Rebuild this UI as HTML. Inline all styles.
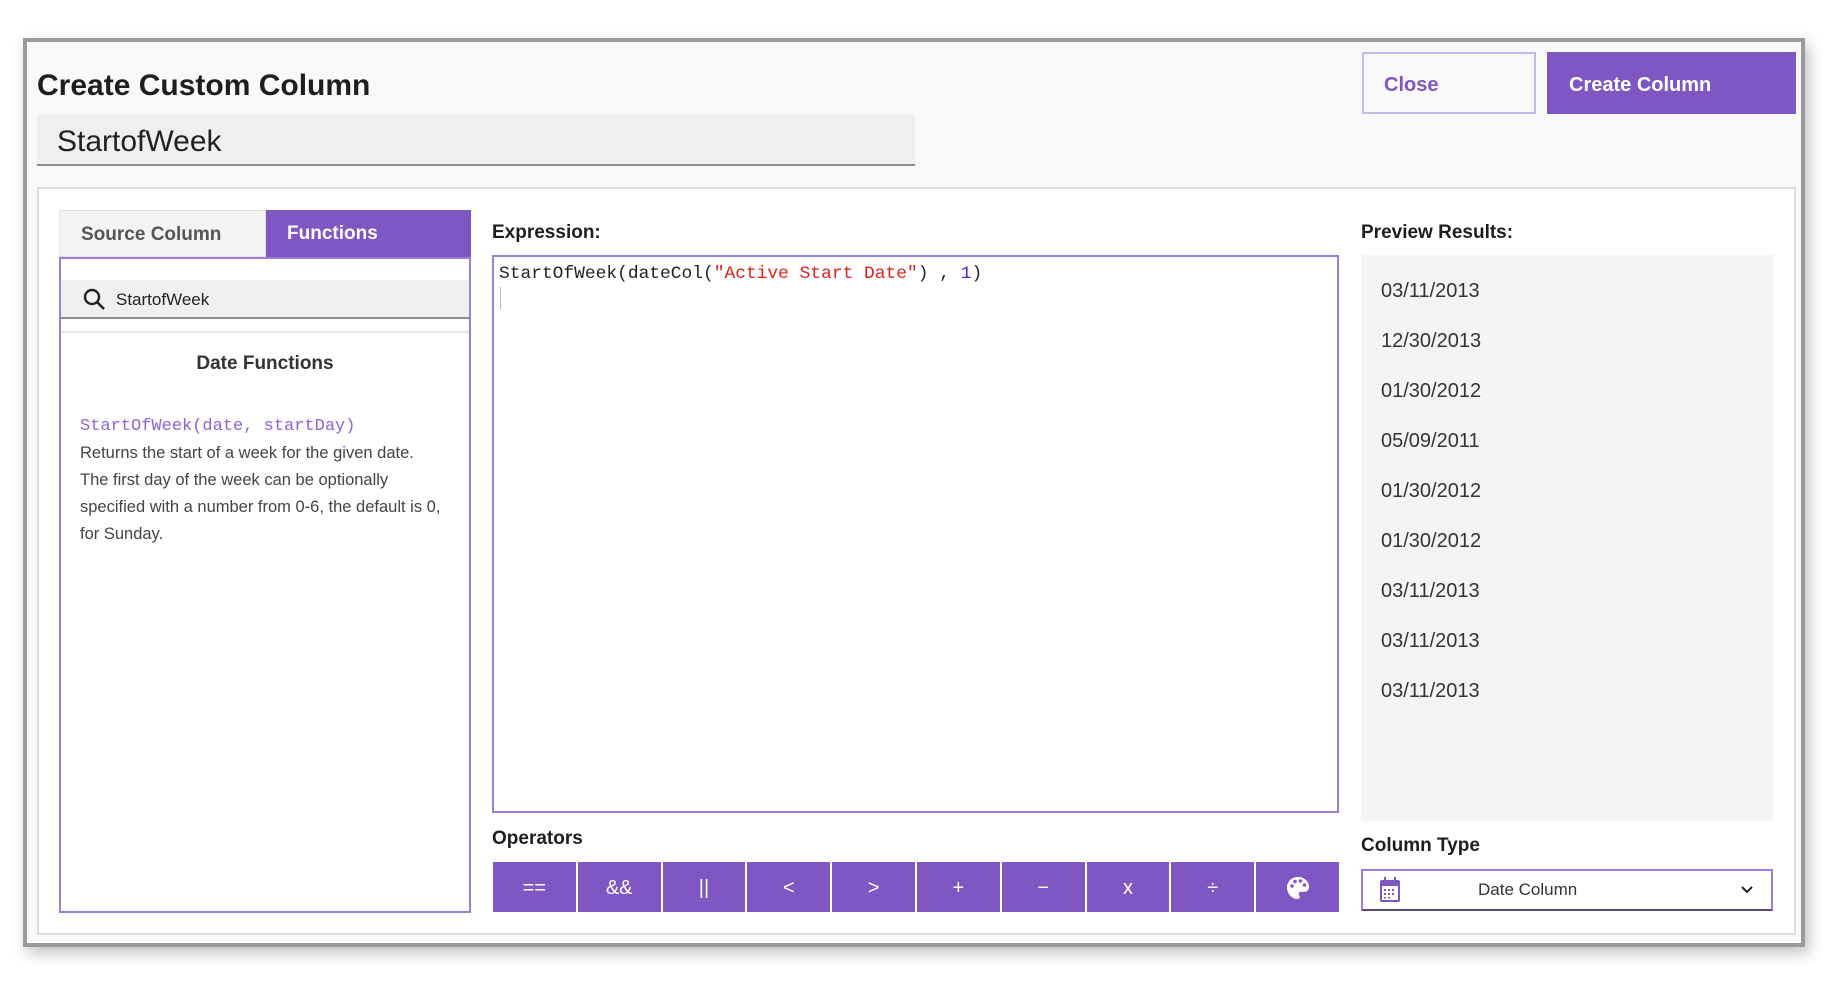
<!DOCTYPE html>
<html><head><meta charset="utf-8"><style>
*{box-sizing:border-box;margin:0;padding:0}
body{width:1828px;height:990px;background:#fff;position:relative;overflow:hidden;font-family:"Liberation Sans",sans-serif;color:#222}
.a{position:absolute}
.dlg{left:23px;top:38px;width:1782px;height:909px;background:#f9f9f9;border:4px solid #9a9a9a;box-shadow:4px 6px 14px rgba(0,0,0,.25)}
.title{left:37px;top:69px;font-size:30px;font-weight:bold;color:#1e1e1e}
.name{left:37px;top:115px;width:878px;height:51px;background:#efefef;border-bottom:2px solid #8d8d8d;font-size:30px;padding:10px 0 0 20px;color:#222}
.close{left:1362px;top:52px;width:174px;height:62px;border:2px solid #c9b8ec;color:#7e57c2;font-weight:bold;font-size:20px;padding:20px 0 0 20px}
.create{left:1547px;top:52px;width:249px;height:62px;background:#7e57c2;color:#fff;font-weight:bold;font-size:20px;padding:22px 0 0 22px}
.panel{left:37px;top:187px;width:1759px;height:748px;background:#fff;border:2px solid #dcdcdc}
.lbl{font-weight:bold;font-size:19px;color:#1e1e1e}
.tabS{left:59px;top:210px;width:207px;height:47px;background:#f3f3f3;color:#555;font-weight:bold;font-size:19px;padding:13px 0 0 21px;border:1px solid #e4e4e4}
.tabF{left:266px;top:210px;width:205px;height:47px;background:#7e57c2;color:#fff;font-weight:bold;font-size:19px;padding:13px 0 0 21px}
.lp{left:59px;top:257px;width:412px;height:656px;border:2px solid #9b7fdc;background:#fff}
.search{left:61px;top:280px;width:408px;height:39px;background:#efefef;border-bottom:2px solid #8d8d8d;font-size:17px;padding:10px 0 0 55px;color:#222}
.sep{left:61px;top:331px;width:408px;height:2px;background:#e6e6e6}
.df{left:61px;top:353px;width:408px;text-align:center;font-weight:bold;font-size:19px;color:#333}
.sig{left:80px;top:417px;font-family:"Liberation Mono",monospace;font-size:17px;color:#8e63d9}
.desc{left:80px;top:440px;width:362px;font-size:16.5px;line-height:27px;color:#444}
.ed{left:492px;top:255px;width:847px;height:558px;border:2px solid #9b7fdc;background:#fff}
.code{left:499px;top:264px;font-family:"Liberation Mono",monospace;font-size:17.9px;color:#222;white-space:pre}
.ops{left:493px;top:862px;width:846px;height:50px;display:flex;gap:2px}
.ops div{flex:1;background:#7e57c2;color:#fff;font-size:20px;display:flex;align-items:center;justify-content:center;padding-top:2px}
.pv{left:1361px;top:255px;width:412px;height:566px;background:#f4f4f4}
.pv div{position:absolute;left:20px;font-size:20px;color:#333}
.sel{left:1361px;top:869px;width:412px;height:42px;border:2px solid #9b7fdc;border-bottom:2px solid #5a4a80;background:#fff}
</style></head><body>
<div class="a dlg"></div>
<div class="a title">Create Custom Column</div>
<div class="a name">StartofWeek</div>
<div class="a close">Close</div>
<div class="a create">Create Column</div>
<div class="a panel"></div>
<div class="a tabS">Source Column</div>
<div class="a tabF">Functions</div>
<div class="a lp"></div>
<div class="a search">StartofWeek</div>
<svg class="a" style="left:82px;top:287px" width="26" height="26" viewBox="0 0 26 26"><circle cx="10" cy="10" r="7" fill="none" stroke="#222" stroke-width="2.4"/><path d="M15 15 L22 22" stroke="#222" stroke-width="2.6"/></svg>
<div class="a sep"></div>
<div class="a df">Date Functions</div>
<div class="a sig">StartOfWeek(date, startDay)</div>
<div class="a desc">Returns the start of a week for the given date. The first day of the week can be optionally specified with a number from 0-6, the default is 0, for Sunday.</div>
<div class="a lbl" style="left:492px;top:222px">Expression:</div>
<div class="a ed"></div>
<div class="a code">StartOfWeek(dateCol(<span style="color:#e0201c">"Active Start Date"</span>) , <span style="color:#3a2bd6">1</span>)</div>
<div class="a" style="left:500px;top:287px;width:1px;height:22px;background:#bbb"></div>
<div class="a lbl" style="left:492px;top:828px">Operators</div>
<div class="a ops"><div>==</div><div>&amp;&amp;</div><div>||</div><div>&lt;</div><div>&gt;</div><div>+</div><div>−</div><div>x</div><div>÷</div><div><svg width="26" height="26" viewBox="0 0 26 26"><path d="M13 2C6.5 2 2 6.8 2 12.5 2 18.5 6.8 24 12.5 24c1.6 0 2.2-1 2.2-2.1 0-1.4-1-1.8-1-3 0-1.2 1-2 2.3-2H19c3 0 5-2.2 5-5C24 6.3 19 2 13 2z" fill="#fff"/><circle cx="7" cy="11" r="1.8" fill="#7e57c2"/><circle cx="10" cy="6.5" r="1.8" fill="#7e57c2"/><circle cx="15.5" cy="6" r="1.8" fill="#7e57c2"/><circle cx="19.5" cy="10" r="1.8" fill="#7e57c2"/></svg></div></div>
<div class="a lbl" style="left:1361px;top:222px">Preview Results:</div>
<div class="a pv">
<div style="top:25px">03/11/2013</div><div style="top:75px">12/30/2013</div><div style="top:125px">01/30/2012</div><div style="top:175px">05/09/2011</div><div style="top:225px">01/30/2012</div><div style="top:275px">01/30/2012</div><div style="top:325px">03/11/2013</div><div style="top:375px">03/11/2013</div><div style="top:425px">03/11/2013</div>
</div>
<div class="a lbl" style="left:1361px;top:835px">Column Type</div>
<div class="a sel"></div>
<svg class="a" style="left:1378px;top:876px" width="24" height="28" viewBox="0 0 24 28"><rect x="2" y="4" width="20" height="22" rx="2" fill="#7e57c2"/><rect x="4" y="10" width="16" height="14" fill="#fff"/><rect x="6" y="1" width="2" height="6" fill="#7e57c2"/><rect x="16" y="1" width="2" height="6" fill="#7e57c2"/><g fill="#7e57c2"><rect x="6" y="13" width="2" height="2"/><rect x="10" y="13" width="2" height="2"/><rect x="14" y="13" width="2" height="2"/><rect x="6" y="17" width="2" height="2"/><rect x="10" y="17" width="2" height="2"/><rect x="14" y="17" width="2" height="2"/><rect x="6" y="21" width="2" height="1.5"/><rect x="10" y="21" width="2" height="1.5"/></g></svg>
<div class="a" style="left:1478px;top:880px;font-size:17px;color:#333">Date Column</div>
<svg class="a" style="left:1740px;top:884px" width="14" height="12" viewBox="0 0 14 12"><path d="M2 3 L7 8 L12 3" fill="none" stroke="#222" stroke-width="2"/></svg>
</body></html>
